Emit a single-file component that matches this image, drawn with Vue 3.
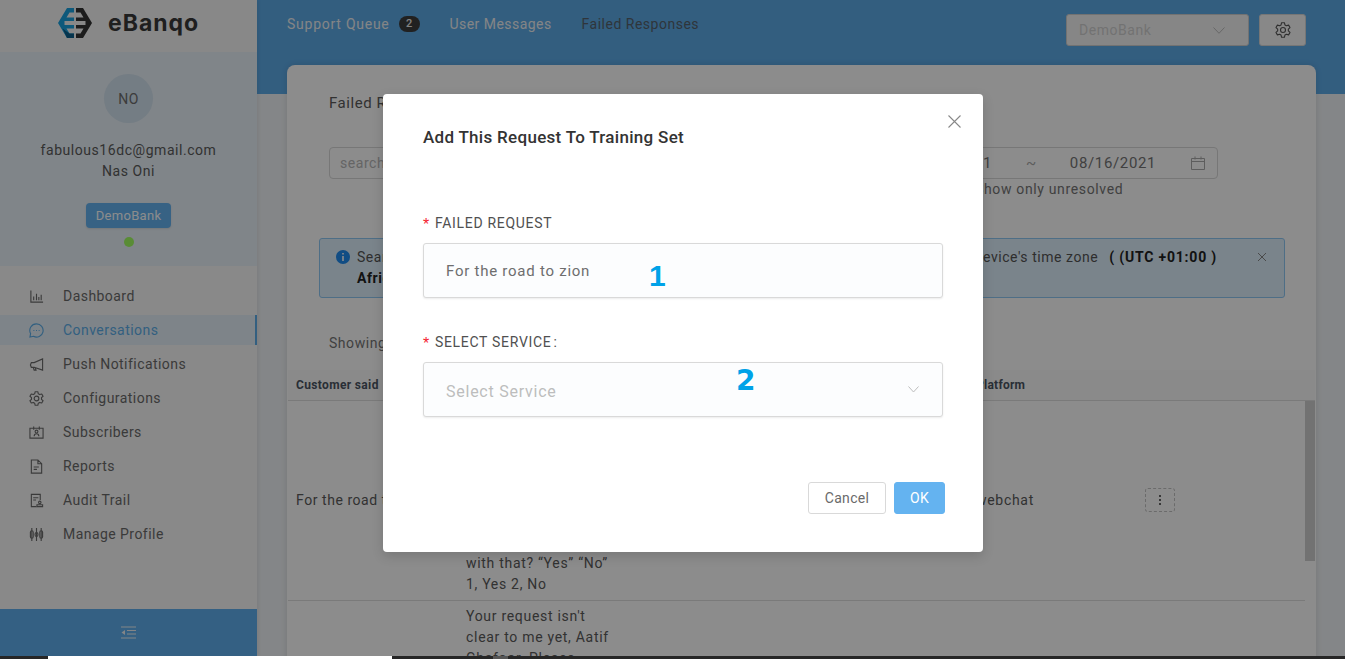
<script setup>
const navItems = [
  { label: 'Dashboard', icon: 'chart' },
  { label: 'Conversations', icon: 'chat', active: true },
  { label: 'Push Notifications', icon: 'horn' },
  { label: 'Configurations', icon: 'gear' },
  { label: 'Subscribers', icon: 'sub' },
  { label: 'Reports', icon: 'doc' },
  { label: 'Audit Trail', icon: 'audit' },
  { label: 'Manage Profile', icon: 'sliders' }
]

function polar(r, deg) {
  const a = (deg * Math.PI) / 180
  return `${(8 + r * Math.cos(a)).toFixed(2)} ${(8 + r * Math.sin(a)).toFixed(2)}`
}
const gear = Array.from({ length: 6 }, (_, k) => {
  const c = k * 60 + 30
  return [polar(5.4, c - 21), polar(7.4, c - 11), polar(7.4, c + 11), polar(5.4, c + 21)].join(' L')
}).join(' L')
const gearPath = `M${gear} Z`
</script>

<template>
  <div class="page">
    <div class="app">
      <aside class="sidebar">
        <div class="logo">
          <svg class="mark" width="34" height="30" viewBox="0 0 34 30">
            <path d="M16 0H9L0 15l9 15h7v-4.500H11.500l-3-5H16v-3.500H6.500V13H16V9.500H8.500l3-5H16z" fill="#1aa3e0" />
            <path d="M4.500 20.500l4.500 9.500h7v-4.500h-4.500z" fill="#0b5f8c" />
            <path d="M18 0h7l9 15-9 15h-7v-4.500h4.500l3-5H18v-3.500h9.500V13H18V9.500h7.500l-3-5H18z" fill="#333" />
          </svg>
          <span class="brand">eBanqo</span>
        </div>
        <div class="profile">
          <div class="avatar">NO</div>
          <div class="email">fabulous16dc@gmail.com</div>
          <div class="name">Nas Oni</div>
          <div class="bank-tag">DemoBank</div>
          <div class="dot"></div>
        </div>
        <nav class="nav">
          <div v-for="item in navItems" :key="item.label" class="nav-item" :class="{ active: item.active }">
            <svg class="nav-icon" width="15" height="15" viewBox="0 0 16 16" fill="none" stroke="currentColor" stroke-width="1.200">
              <template v-if="item.icon === 'chart'">
                <path d="M2 1.500v12.500h13M5 12V8M8 12V5M10.500 12V8.500M13 12V6" />
              </template>
              <template v-else-if="item.icon === 'chat'">
                <path d="M8 1a7 7 0 1 1-3.200 13.200L1 15l.7-3.700A7 7 0 0 1 8 1z" />
                <path d="M4.700 8h1M7.500 8h1M10.300 8h1" stroke-width="1.300" />
              </template>
              <template v-else-if="item.icon === 'horn'">
                <path d="M14.500 2v12L5.500 11H2.500L1.500 8.500 2.500 6h3zM4.500 11l1 3h2l-.8-2.300" />
              </template>
              <template v-else-if="item.icon === 'gear'">
                <path :d="gearPath" stroke-linejoin="round" />
                <circle cx="8" cy="8" r="2.500" />
              </template>
              <template v-else-if="item.icon === 'sub'">
                <path d="M1 3.500h14v10.500H1zM5 1.500v3.500M11 1.500v3.500" />
                <circle cx="8" cy="7" r="1.500" />
                <path d="M5.500 12c0-2 1-2.700 2.500-2.700s2.500.7 2.500 2.700" />
              </template>
              <template v-else-if="item.icon === 'doc'">
                <path d="M2.500 1h7l4 4v10h-11zM9.500 1v4h4M5 8.500h5.500M5 11h3.500" />
              </template>
              <template v-else-if="item.icon === 'audit'">
                <path d="M8 14.500H2.500v-13h9.500v6M4.500 5h5.500M4.500 7.500h3" />
                <circle cx="11.500" cy="10" r="1.300" />
                <path d="M8.500 12.500h6v2h-6z" />
              </template>
              <template v-else>
                <path d="M3 1v14M8 1v14M13 1v14" />
                <rect x="1.500" y="4" width="3" height="8" rx="1.500" />
                <rect x="6.500" y="6" width="3" height="4" rx="1.500" />
                <rect x="11.500" y="4" width="3" height="8" rx="1.500" />
              </template>
            </svg>
            <span>{{ item.label }}</span>
          </div>
        </nav>
        <div class="collapse">
          <svg width="15" height="13" viewBox="0 0 15 13" fill="none" stroke="#eef2f6" stroke-width="1.200">
            <path d="M0 1h15M6 4.500h9M6 8h9M0 12h15" />
            <path d="M4 4v5L.500 6.500z" fill="#eef2f6" stroke="none" />
          </svg>
        </div>
      </aside>

      <main class="main">
        <header class="topbar">
          <div class="tabs">
            <span class="tab first">Support Queue<span class="badge">2</span></span>
            <span class="tab">User Messages</span>
            <span class="tab current">Failed Responses</span>
          </div>
          <div class="top-actions">
            <div class="bank-select">
              <span>DemoBank</span>
              <svg width="12" height="7" viewBox="0 0 12 7" fill="none" stroke="#bbb"><path d="M.5.500L6 6.300 11.500.500" /></svg>
            </div>
            <div class="gear-btn">
              <svg width="16" height="16" viewBox="0 0 16 16" fill="none" stroke="#555" stroke-width="1.100">
                <path :d="gearPath" stroke-linejoin="round" />
                <circle cx="8" cy="8" r="2.500" />
              </svg>
            </div>
          </div>
        </header>

        <section class="card">
          <div class="card-title">Failed Responses</div>
          <div class="filters">
            <div class="search">search</div>
            <div class="date-col">
              <div class="range">
                <span class="d1">08/01/2021</span>
                <span class="tilde">~</span>
                <span class="d2">08/16/2021</span>
                <svg width="14" height="14" viewBox="0 0 14 14" fill="none" stroke="#aaa"><path d="M.5 2.500h13v11H.5zM.5 5.500h13M4 .5v3M10 .5v3" /></svg>
              </div>
              <div class="unresolved">Show only unresolved</div>
            </div>
          </div>
          <div class="alert">
            <svg class="info" width="14" height="14" viewBox="0 0 14 14">
              <circle cx="7" cy="7" r="7" fill="#1f8cf0" />
              <path d="M6.200 3h1.600v1.600H6.200zM6.200 6h1.600v5H6.200z" fill="#fff" />
            </svg>
            <div class="alert-line">
              <span>Search</span>
              <span>device's time zone <b>( (UTC +01:00 )</b></span>
            </div>
            <div><b class="zone">Africa</b></div>
            <svg class="alert-x" width="10" height="10" viewBox="0 0 10 10" stroke="#888" fill="none"><path d="M1 1l8 8M9 1l-8 8" /></svg>
          </div>
          <div class="showing">Showing</div>
          <div class="table">
            <div class="row head">
              <div class="c1">Customer said</div>
              <div class="c2"></div>
              <div class="c3">Platform</div>
              <div class="c4"></div>
            </div>
            <div class="scrollbar"></div>
            <div class="row r1">
              <div class="c1 mid">For the road to zion</div>
              <div class="c2 wrap end">with that? “Yes” “No”<br />1, Yes 2, No</div>
              <div class="c3 mid">webchat</div>
              <div class="c4 mid"><span class="kebab"><i></i><i></i><i></i></span></div>
            </div>
            <div class="row r2">
              <div class="c1"></div>
              <div class="c2 wrap">Your request isn't<br />clear to me yet, Aatif<br />Ghafoor. Please</div>
            </div>
          </div>
        </section>
      </main>
    </div>
    <div class="taskbar"><span class="tb-white"></span><span class="tb-grey"></span></div>

    <div class="mask">
      <div class="modal">
        <svg class="close" width="13" height="13" viewBox="0 0 13 13" fill="none" stroke="#888" stroke-width="1.100"><path d="M.5.500l12 12M12.500.500l-12 12" /></svg>
        <h2 class="modal-title">Add This Request To Training Set</h2>
        <div class="field first">
          <label class="label"><em>*</em>FAILED REQUEST</label>
          <div class="input">For the road to zion<span class="num one">1</span></div>
        </div>
        <div class="field second">
          <label class="label"><em>*</em>SELECT SERVICE<span class="colon">:</span></label>
          <div class="input select">
            <span class="placeholder">Select Service</span>
            <span class="num two">2</span>
            <svg width="11" height="7" viewBox="0 0 11 7" fill="none" stroke="#bdbdbd"><path d="M.5.500l5 5.500 5-5.500" /></svg>
          </div>
        </div>
        <div class="actions">
          <button class="btn">Cancel</button>
          <button class="btn ok">OK</button>
        </div>
      </div>
    </div>
  </div>
</template>

<style scoped>
.page { width: 1345px; height: 659px; overflow: hidden; position: relative; font-family: Roboto, "Liberation Sans", sans-serif; font-size: 14px; color: #5b5b5b; letter-spacing: .55px; }
.app { display: flex; height: 656px; background: #f1f4f7; overflow: hidden; }
.sidebar { width: 257px; flex: none; display: flex; flex-direction: column; background: #fafafa; box-shadow: 2px 0 3px rgba(0,0,0,.06); z-index: 1; }
.logo { height: 52px; flex: none; display: flex; align-items: center; gap: 16px; padding: 0 0 0 58px; box-sizing: border-box; background: #f7f7f7; }
.mark { margin-top: -6px; }
.brand { font-family: Inter, sans-serif; font-weight: 700; font-size: 23px; color: #3a3a3a; letter-spacing: 1px; margin-top: -6px; }
.profile { height: 214px; flex: none; box-sizing: border-box; padding-top: 22px; display: flex; flex-direction: column; align-items: center; background: #e9f2f9; }
.avatar { width: 49px; height: 49px; border-radius: 50%; background: #d3e3f0; display: flex; align-items: center; justify-content: center; color: #6d6d6d; font-size: 14px; }
.email { margin-top: 17px; line-height: 21px; }
.name { line-height: 21px; }
.bank-tag { margin-top: 21px; width: 85px; height: 25px; line-height: 25px; text-align: center; border-radius: 4px; background: #64b3f0; color: #fff; font-size: 13px; letter-spacing: .3px; box-shadow: 0 1px 2px rgba(0,0,0,.1); }
.dot { margin-top: 9px; width: 10px; height: 10px; border-radius: 50%; background: #a2ff62; }
.nav { flex: 1; padding-top: 15px; }
.nav-item { height: 30px; margin-bottom: 4px; display: flex; align-items: center; padding-left: 29px; gap: 19px; color: #6b6b6b; letter-spacing: .45px; }
.nav-item span { line-height: 30px; }
.nav-icon { flex: none; }
.nav-item.active { color: #5daeea; background: #e5f1f9; box-shadow: inset -2px 0 0 #5daeea; }
.collapse { height: 47px; flex: none; display: flex; align-items: center; justify-content: center; background: #5fb0ee; }

.main { flex: 1; position: relative; min-width: 0; }
.topbar { height: 94px; box-sizing: border-box; background: #5dabe8; display: flex; justify-content: space-between; padding: 14px 39px 0 30px; align-items: flex-start; }
.tabs { display: flex; gap: 30px; height: 21px; align-items: center; margin-top: -1px; letter-spacing: .45px; }
.tab { color: #f0f2f4; display: flex; align-items: center; }
.tab.first { letter-spacing: .75px; }
.tab.current { color: #56626c; letter-spacing: .5px; }
.badge { margin-left: 9px; width: 21px; height: 16px; border-radius: 8px; background: #3d3d3d; color: #eee; font-size: 11px; font-weight: 500; display: flex; align-items: center; justify-content: center; letter-spacing: 0; }
.top-actions { display: flex; gap: 10px; }
.bank-select { width: 183px; height: 32px; box-sizing: border-box; border: 1px solid #d0d0d0; border-radius: 3px; background: #f5f5f5; display: flex; align-items: center; justify-content: space-between; padding: 0 23px 0 12px; color: #d0d0d0; }
.gear-btn { width: 47px; height: 32px; box-sizing: border-box; border: 1px solid #d8d8d8; border-radius: 3px; background: #f8f8f8; display: flex; align-items: center; justify-content: center; }

.card { position: absolute; left: 30px; top: 65px; width: 1029px; height: 600px; background: #fff; border-radius: 8px 8px 0 0; box-shadow: 0 0 6px rgba(0,0,0,.12); }
.card-title { position: absolute; left: 42px; top: 29px; font-size: 15px; color: #5b5b5b; }
.filters { position: absolute; left: 42px; top: 82px; right: 98px; display: flex; justify-content: space-between; }
.search { width: 300px; height: 32px; box-sizing: border-box; border: 1px solid #d9d9d9; border-radius: 4px; padding-left: 10px; line-height: 30px; color: #b8b8b8; }
.range { width: 340px; height: 32px; box-sizing: border-box; border: 1px solid #d9d9d9; border-radius: 4px; display: flex; align-items: center; padding: 0 12px 0 11px; color: #767676; font-size: 15px; letter-spacing: .65px; }
.d1 { width: 102px; flex: none; text-align: right; }
.tilde { margin-left: 34px; flex: none; color: #aaa; }
.d2 { margin-left: 33px; margin-right: auto; }
.date-col { margin-left: auto; }
.unresolved { padding-left: 97px; line-height: 21px; color: #767676; letter-spacing: .65px; }
.alert { position: absolute; left: 32px; top: 173px; width: 966px; height: 60px; box-sizing: border-box; border: 1px solid #8fc8f5; border-radius: 3px; background: #dff0fd; padding: 8px 0 0 37px; line-height: 21px; color: #555; white-space: nowrap; }
.alert-line { display: flex; justify-content: space-between; padding-right: 67px; }
.alert b { color: #222; font-weight: 700; margin-left: 7px; letter-spacing: .8px; }
.alert b.zone { margin-left: 0; letter-spacing: .55px; }
.info { position: absolute; left: 16px; top: 11px; }
.alert-x { position: absolute; right: 17px; top: 13px; }
.showing { position: absolute; left: 42px; top: 268px; line-height: 21px; color: #767676; }
.table { position: absolute; left: 1px; top: 305px; width: 1027px; }
.row { display: flex; border-bottom: 1px solid #dfdfdf; position: relative; }
.head { height: 31px; box-sizing: border-box; align-items: center; background: #fcfcfc; font-weight: 700; font-size: 12px; letter-spacing: .35px; color: #4b5563; }
.head .c3 { letter-spacing: .25px; }
.r1 { height: 200px; width: 1017px; box-sizing: border-box; }
.r2 { width: 1017px; border-bottom: 0; padding-top: 5px; }
.c1 { width: 178px; padding-left: 8px; box-sizing: border-box; flex: none; white-space: nowrap; }
.c2 { width: 510px; flex: none; letter-spacing: .7px; }
.c3 { width: 169px; flex: none; letter-spacing: .7px; }
.c4 { flex: none; }
.wrap { line-height: 21px; }
.end { align-self: flex-end; padding-bottom: 5px; }
.mid { align-self: center; margin-bottom: 2px; }
.kebab { width: 30px; height: 24px; box-sizing: border-box; border: 1px dashed #c4c4c4; border-radius: 3px; display: flex; flex-direction: column; align-items: center; justify-content: center; gap: 2px; }
.kebab i { width: 2px; height: 2px; background: #666; }
.scrollbar { position: absolute; right: 0; top: 31px; width: 10px; height: 160px; background: #cfcfcf; }
.taskbar { height: 3px; background: #262626; display: flex; position: relative; }
.tb-white { width: 344px; margin-left: 48px; background: #fff; }
.tb-grey { width: 15px; margin-left: 101px; background: #555; }

.mask { position: absolute; inset: 0; bottom: 3px; background: rgba(0,0,0,.45); z-index: 5; }
.modal { position: absolute; left: 383px; top: 94px; width: 600px; height: 458px; background: #fff; border-radius: 4px; box-shadow: 0 4px 12px rgba(0,0,0,.15); box-sizing: border-box; padding: 0 40px; }
.close { position: absolute; right: 22px; top: 21px; }
.modal-title { margin: 0; padding-top: 33px; font-size: 17px; line-height: 20px; font-weight: 500; color: #333; letter-spacing: .3px; }
.field.first { margin-top: 66px; }
.field.second { margin-top: 34px; }
.label { display: block; line-height: 20px; font-size: 14px; color: #505050; margin-bottom: 10px; letter-spacing: .7px; }
.label em { color: #f5222d; font-style: normal; font-size: 16px; line-height: 1; margin-right: 5px; vertical-align: -2px; font-family: "Liberation Sans", sans-serif; }
.colon { margin-left: 2px; }
.input { position: relative; width: 520px; height: 55px; box-sizing: border-box; border: 1px solid #d9d9d9; border-radius: 3px; background: #fcfdfe; box-shadow: 0 1px 2px rgba(0,0,0,.08); padding: 0 22px; line-height: 54px; color: #6e6e6e; font-size: 15px; letter-spacing: .75px; }
.select { display: flex; align-items: center; justify-content: space-between; padding-right: 23px; }
.placeholder { color: #bdbdbd; font-size: 16px; margin-top: 5px; letter-spacing: .75px; }
.num { position: absolute; font-family: "Liberation Sans", sans-serif; font-weight: 700; font-size: 30px; line-height: 30px; color: #00a2e8; letter-spacing: 0; }
.one { left: 225px; top: 17px; }
.two { left: 312px; top: 3px; font-family: "DejaVu Sans", sans-serif; font-size: 28px; }
.actions { position: absolute; right: 38px; top: 388px; display: flex; gap: 8px; }
.btn { height: 32px; width: 78px; box-sizing: border-box; border: 1px solid #d9d9d9; border-radius: 3px; background: #fff; color: #6a6a6a; font-family: inherit; font-size: 14px; letter-spacing: .3px; padding: 0; }
.btn.ok { width: 51px; background: #64b3f0; border-color: #64b3f0; color: #fff; }
</style>
